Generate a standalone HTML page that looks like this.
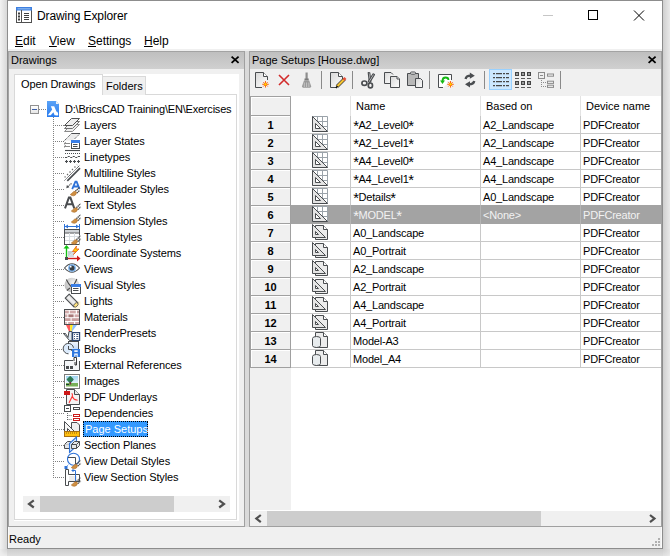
<!DOCTYPE html><html><head><meta charset="utf-8"><style>
*{margin:0;padding:0;box-sizing:border-box}
html,body{width:670px;height:556px;overflow:hidden;background:#f0f0f0}
body{position:relative;font-family:"Liberation Sans",sans-serif;font-size:11px;color:#000}
.a{position:absolute}
.t{position:absolute;white-space:nowrap;line-height:13px}
.d{letter-spacing:-0.2px}
.st{display:inline-block;transform:scale(1.35);transform-origin:50% 35%;margin:0 0.7px}
.u{text-decoration:underline}
svg{position:absolute;overflow:visible}
.hdr{background:linear-gradient(to bottom,#a3a3a3 0,#a3a3a3 1px,#bfbfbf 1px,#d0d0d0 100%)}
</style></head><body>
<div class="a" style="left:0px;top:0px;width:7px;height:549px;background:linear-gradient(to right,#f2f2f2,#d8d8d8)"></div>
<div class="a" style="left:663px;top:0px;width:7px;height:549px;background:linear-gradient(to right,#cfcfcf,#e9e9e9)"></div>
<div class="a" style="left:7px;top:549px;width:656px;height:7px;background:linear-gradient(to bottom,#cdcdcd,#dedede)"></div>
<div class="a" style="left:0px;top:549px;width:7px;height:7px;background:radial-gradient(circle at 100% 0,#d6d6d6 0,#ececec 7px,#f0f0f0 10px)"></div>
<div class="a" style="left:663px;top:549px;width:7px;height:7px;background:radial-gradient(circle at 0 0,#cfcfcf 0,#e6e6e6 8px,#eeeeee 10px)"></div>
<div class="a" style="left:7px;top:0px;width:656px;height:549px;border:1px solid #8d8d8d;background:#fff"></div>
<div class="t" style="left:37px;top:10px;font-size:12px;letter-spacing:-0.1px">Drawing Explorer</div>
<div class="a" style="left:543px;top:15px;width:10px;height:1px;background:#c6c6c6"></div>
<div class="a" style="left:588px;top:10px;width:10px;height:10px;border:1px solid #000"></div>
<svg style="left:633px;top:10px" width="12" height="11" viewBox="0 0 12 11"><path d="M1 0.5L11 10.5M11 0.5L1 10.5" stroke="#000" stroke-width="1"/></svg>
<div class="t" style="left:15px;top:35px;font-size:12px"><span class="u">E</span>dit</div>
<div class="t" style="left:49px;top:35px;font-size:12px"><span class="u">V</span>iew</div>
<div class="t" style="left:88px;top:35px;font-size:12px"><span class="u">S</span>ettings</div>
<div class="t" style="left:144px;top:35px;font-size:12px"><span class="u">H</span>elp</div>
<div class="a" style="left:8px;top:49px;width:654px;height:2px;background:#f0f0f0"></div>
<div class="a" style="left:8px;top:51px;width:237px;height:476px;background:#f0f0f0;border-left:1px solid #a4a4a4;border-right:1px solid #a0a0a0;border-bottom:1px solid #a0a0a0"></div>
<div class="a hdr" style="left:9px;top:51px;width:235px;height:18px"></div>
<div class="t" style="left:11px;top:54px;">Drawings</div>
<svg style="left:231px;top:56px" width="9" height="8" viewBox="0 0 9 8"><path d="M0.6 0.6L7.6 6.9M7.6 0.6L0.6 6.9" stroke="#000" stroke-width="1.8"/></svg>
<div class="a" style="left:14px;top:74px;width:225px;height:447px;background:#fff"></div>
<div class="a" style="left:14px;top:94px;width:223px;height:426px;border:1px solid #d9d9d9"></div>
<div class="a" style="left:14px;top:74px;width:89px;height:21px;background:#fff;border:1px solid #d9d9d9;border-bottom:none"></div>
<div class="a" style="left:102px;top:76px;width:44px;height:19px;background:#f0f0f0;border:1px solid #d9d9d9;border-bottom:none"></div>
<div class="t" style="left:21px;top:78px;letter-spacing:-0.1px">Open Drawings</div>
<div class="t" style="left:106px;top:80px;">Folders</div>
<div class="a" style="left:30px;top:105px;width:9px;height:9px;border:1px solid #919191;background:linear-gradient(#fff,#e6e6e6)"></div>
<div class="a" style="left:32px;top:109px;width:5px;height:1px;background:#3c5fa8"></div>
<div class="a" style="left:39px;top:109px;width:7px;height:1px;background:repeating-linear-gradient(to right,#808080 0 1px,transparent 1px 2px)"></div>
<div class="a" style="left:53px;top:117px;width:1px;height:361px;background:repeating-linear-gradient(to bottom,#808080 0 1px,transparent 1px 2px)"></div>
<svg style="left:47px;top:101px" width="12" height="16" viewBox="0 0 12 16"><path d="M0 0H8L12 4V16H0Z" fill="#3d8ee8"/><path d="M8 0V4H12" fill="#cfe3fa"/><path d="M3 13L6 6L9 13M4 10H8" stroke="#fff" stroke-width="1.6" fill="none"/></svg>
<div class="t" style="left:65px;top:103px;letter-spacing:-0.2px">D:\BricsCAD Training\EN\Exercises</div>
<div class="a" style="left:54px;top:125px;width:10px;height:1px;background:repeating-linear-gradient(to right,transparent 0 1px,#808080 1px 2px)"></div>
<div class="t" style="left:84px;top:119px;letter-spacing:-0.1px">Layers</div>
<div class="a" style="left:54px;top:141px;width:10px;height:1px;background:repeating-linear-gradient(to right,transparent 0 1px,#808080 1px 2px)"></div>
<div class="t" style="left:84px;top:135px;letter-spacing:-0.1px">Layer States</div>
<div class="a" style="left:54px;top:157px;width:10px;height:1px;background:repeating-linear-gradient(to right,transparent 0 1px,#808080 1px 2px)"></div>
<div class="t" style="left:84px;top:151px;letter-spacing:-0.1px">Linetypes</div>
<div class="a" style="left:54px;top:173px;width:10px;height:1px;background:repeating-linear-gradient(to right,transparent 0 1px,#808080 1px 2px)"></div>
<div class="t" style="left:84px;top:167px;letter-spacing:-0.1px">Multiline Styles</div>
<div class="a" style="left:54px;top:189px;width:10px;height:1px;background:repeating-linear-gradient(to right,transparent 0 1px,#808080 1px 2px)"></div>
<div class="t" style="left:84px;top:183px;letter-spacing:-0.1px">Multileader Styles</div>
<div class="a" style="left:54px;top:205px;width:10px;height:1px;background:repeating-linear-gradient(to right,transparent 0 1px,#808080 1px 2px)"></div>
<div class="t" style="left:84px;top:199px;letter-spacing:-0.1px">Text Styles</div>
<div class="a" style="left:54px;top:221px;width:10px;height:1px;background:repeating-linear-gradient(to right,transparent 0 1px,#808080 1px 2px)"></div>
<div class="t" style="left:84px;top:215px;letter-spacing:-0.1px">Dimension Styles</div>
<div class="a" style="left:54px;top:237px;width:10px;height:1px;background:repeating-linear-gradient(to right,transparent 0 1px,#808080 1px 2px)"></div>
<div class="t" style="left:84px;top:231px;letter-spacing:-0.1px">Table Styles</div>
<div class="a" style="left:54px;top:253px;width:10px;height:1px;background:repeating-linear-gradient(to right,transparent 0 1px,#808080 1px 2px)"></div>
<div class="t" style="left:84px;top:247px;letter-spacing:-0.1px">Coordinate Systems</div>
<div class="a" style="left:54px;top:269px;width:10px;height:1px;background:repeating-linear-gradient(to right,transparent 0 1px,#808080 1px 2px)"></div>
<div class="t" style="left:84px;top:263px;letter-spacing:-0.1px">Views</div>
<div class="a" style="left:54px;top:285px;width:10px;height:1px;background:repeating-linear-gradient(to right,transparent 0 1px,#808080 1px 2px)"></div>
<div class="t" style="left:84px;top:279px;letter-spacing:-0.1px">Visual Styles</div>
<div class="a" style="left:54px;top:301px;width:10px;height:1px;background:repeating-linear-gradient(to right,transparent 0 1px,#808080 1px 2px)"></div>
<div class="t" style="left:84px;top:295px;letter-spacing:-0.1px">Lights</div>
<div class="a" style="left:54px;top:317px;width:10px;height:1px;background:repeating-linear-gradient(to right,transparent 0 1px,#808080 1px 2px)"></div>
<div class="t" style="left:84px;top:311px;letter-spacing:-0.1px">Materials</div>
<div class="a" style="left:54px;top:333px;width:10px;height:1px;background:repeating-linear-gradient(to right,transparent 0 1px,#808080 1px 2px)"></div>
<div class="t" style="left:84px;top:327px;letter-spacing:-0.1px">RenderPresets</div>
<div class="a" style="left:54px;top:349px;width:10px;height:1px;background:repeating-linear-gradient(to right,transparent 0 1px,#808080 1px 2px)"></div>
<div class="t" style="left:84px;top:343px;letter-spacing:-0.1px">Blocks</div>
<div class="a" style="left:54px;top:365px;width:10px;height:1px;background:repeating-linear-gradient(to right,transparent 0 1px,#808080 1px 2px)"></div>
<div class="t" style="left:84px;top:359px;letter-spacing:-0.1px">External References</div>
<div class="a" style="left:54px;top:381px;width:10px;height:1px;background:repeating-linear-gradient(to right,transparent 0 1px,#808080 1px 2px)"></div>
<div class="t" style="left:84px;top:375px;letter-spacing:-0.1px">Images</div>
<div class="a" style="left:54px;top:397px;width:10px;height:1px;background:repeating-linear-gradient(to right,transparent 0 1px,#808080 1px 2px)"></div>
<div class="t" style="left:84px;top:391px;letter-spacing:-0.1px">PDF Underlays</div>
<div class="a" style="left:54px;top:413px;width:10px;height:1px;background:repeating-linear-gradient(to right,transparent 0 1px,#808080 1px 2px)"></div>
<div class="t" style="left:84px;top:407px;letter-spacing:-0.1px">Dependencies</div>
<div class="a" style="left:54px;top:429px;width:10px;height:1px;background:repeating-linear-gradient(to right,transparent 0 1px,#808080 1px 2px)"></div>
<div class="a" style="left:83px;top:421px;width:65px;height:16px;background:#3399ff;border:1px dotted #000"></div>
<div class="t" style="left:85px;top:423px;color:#fff">Page Setups</div>
<div class="a" style="left:54px;top:445px;width:10px;height:1px;background:repeating-linear-gradient(to right,transparent 0 1px,#808080 1px 2px)"></div>
<div class="t" style="left:84px;top:439px;letter-spacing:-0.1px">Section Planes</div>
<div class="a" style="left:54px;top:461px;width:10px;height:1px;background:repeating-linear-gradient(to right,transparent 0 1px,#808080 1px 2px)"></div>
<div class="t" style="left:84px;top:455px;letter-spacing:-0.1px">View Detail Styles</div>
<div class="a" style="left:54px;top:477px;width:10px;height:1px;background:repeating-linear-gradient(to right,transparent 0 1px,#808080 1px 2px)"></div>
<div class="t" style="left:84px;top:471px;letter-spacing:-0.1px">View Section Styles</div>
<div class="a" style="left:23px;top:496px;width:207px;height:16px;background:#f0f0f0"></div>
<div class="a" style="left:40px;top:496px;width:134px;height:16px;background:#cdcdcd"></div>
<svg style="left:23px;top:496px" width="17" height="16" viewBox="0 0 17 16"><path d="M10.8 4.3L6 7.9L10.8 11.5" stroke="#505050" stroke-width="2.2" fill="none"/></svg>
<svg style="left:213px;top:496px" width="17" height="16" viewBox="0 0 17 16"><path d="M6.2 4.3L11 7.9L6.2 11.5" stroke="#505050" stroke-width="2.2" fill="none"/></svg>
<div class="a" style="left:245px;top:51px;width:4px;height:476px;background:#dadada"></div>
<div class="a" style="left:249px;top:51px;width:413px;height:476px;background:#f0f0f0;border-left:1px solid #a0a0a0;border-bottom:1px solid #a0a0a0;border-right:1px solid #a0a0a0"></div>
<div class="a hdr" style="left:250px;top:51px;width:411px;height:18px"></div>
<div class="t" style="left:252px;top:54px;">Page Setups [House.dwg]</div>
<svg style="left:648px;top:56px" width="9" height="8" viewBox="0 0 9 8"><path d="M0.6 0.6L7.6 6.9M7.6 0.6L0.6 6.9" stroke="#000" stroke-width="1.8"/></svg>
<div class="a" style="left:250px;top:96px;width:411px;height:415px;background:#fff"></div>
<div class="a" style="left:250px;top:96px;width:41px;height:414px;background:#f0f0f0"></div>
<div class="a" style="left:350px;top:96px;width:1px;height:20px;background:#e3e3e3"></div>
<div class="a" style="left:350px;top:116px;width:1px;height:252px;background:#c8c8c8"></div>
<div class="a" style="left:480px;top:96px;width:1px;height:20px;background:#e3e3e3"></div>
<div class="a" style="left:480px;top:116px;width:1px;height:252px;background:#c8c8c8"></div>
<div class="a" style="left:580px;top:96px;width:1px;height:20px;background:#e3e3e3"></div>
<div class="a" style="left:580px;top:116px;width:1px;height:252px;background:#c8c8c8"></div>
<div class="a" style="left:250px;top:96px;width:41px;height:20px;border:1px solid #a0a0a0;box-shadow:inset 1px 1px 0 #fff"></div>
<div class="a" style="left:291px;top:133px;width:370px;height:1px;background:#c8c8c8"></div>
<div class="a" style="left:250px;top:115px;width:41px;height:19px;border:1px solid #a0a0a0;box-shadow:inset 1px 1px 0 #fff"></div>
<div class="t" style="left:250px;top:119px;width:41px;text-align:center;font-weight:bold">1</div>
<div class="t" style="left:353px;top:119px;;letter-spacing:-0.2px"><span class="st">*</span>A2_Level0<span class="st">*</span></div>
<div class="t" style="left:483px;top:119px;;letter-spacing:-0.2px">A2_Landscape</div>
<div class="t" style="left:583px;top:119px;;letter-spacing:-0.2px">PDFCreator</div>
<div class="a" style="left:291px;top:151px;width:370px;height:1px;background:#c8c8c8"></div>
<div class="a" style="left:250px;top:133px;width:41px;height:19px;border:1px solid #a0a0a0;box-shadow:inset 1px 1px 0 #fff"></div>
<div class="t" style="left:250px;top:137px;width:41px;text-align:center;font-weight:bold">2</div>
<div class="t" style="left:353px;top:137px;;letter-spacing:-0.2px"><span class="st">*</span>A2_Level1<span class="st">*</span></div>
<div class="t" style="left:483px;top:137px;;letter-spacing:-0.2px">A2_Landscape</div>
<div class="t" style="left:583px;top:137px;;letter-spacing:-0.2px">PDFCreator</div>
<div class="a" style="left:291px;top:169px;width:370px;height:1px;background:#c8c8c8"></div>
<div class="a" style="left:250px;top:151px;width:41px;height:19px;border:1px solid #a0a0a0;box-shadow:inset 1px 1px 0 #fff"></div>
<div class="t" style="left:250px;top:155px;width:41px;text-align:center;font-weight:bold">3</div>
<div class="t" style="left:353px;top:155px;;letter-spacing:-0.2px"><span class="st">*</span>A4_Level0<span class="st">*</span></div>
<div class="t" style="left:483px;top:155px;;letter-spacing:-0.2px">A4_Landscape</div>
<div class="t" style="left:583px;top:155px;;letter-spacing:-0.2px">PDFCreator</div>
<div class="a" style="left:291px;top:187px;width:370px;height:1px;background:#c8c8c8"></div>
<div class="a" style="left:250px;top:169px;width:41px;height:19px;border:1px solid #a0a0a0;box-shadow:inset 1px 1px 0 #fff"></div>
<div class="t" style="left:250px;top:173px;width:41px;text-align:center;font-weight:bold">4</div>
<div class="t" style="left:353px;top:173px;;letter-spacing:-0.2px"><span class="st">*</span>A4_Level1<span class="st">*</span></div>
<div class="t" style="left:483px;top:173px;;letter-spacing:-0.2px">A4_Landscape</div>
<div class="t" style="left:583px;top:173px;;letter-spacing:-0.2px">PDFCreator</div>
<div class="a" style="left:291px;top:205px;width:370px;height:1px;background:#c8c8c8"></div>
<div class="a" style="left:250px;top:187px;width:41px;height:19px;border:1px solid #a0a0a0;box-shadow:inset 1px 1px 0 #fff"></div>
<div class="t" style="left:250px;top:191px;width:41px;text-align:center;font-weight:bold">5</div>
<div class="t" style="left:353px;top:191px;;letter-spacing:-0.2px"><span class="st">*</span>Details<span class="st">*</span></div>
<div class="t" style="left:483px;top:191px;;letter-spacing:-0.2px">A0_Landscape</div>
<div class="t" style="left:583px;top:191px;;letter-spacing:-0.2px">PDFCreator</div>
<div class="a" style="left:291px;top:223px;width:370px;height:1px;background:#c8c8c8"></div>
<div class="a" style="left:291px;top:205px;width:370px;height:19px;background:#a3a3a3"></div>
<div class="a" style="left:350px;top:205px;width:1px;height:19px;background:#b4b4b4"></div>
<div class="a" style="left:480px;top:205px;width:1px;height:19px;background:#b4b4b4"></div>
<div class="a" style="left:580px;top:205px;width:1px;height:19px;background:#b4b4b4"></div>
<div class="a" style="left:250px;top:205px;width:41px;height:19px;border:1px solid #a0a0a0;box-shadow:inset 1px 1px 0 #fff"></div>
<div class="t" style="left:250px;top:209px;width:41px;text-align:center;font-weight:bold">6</div>
<div class="t" style="left:353px;top:209px;color:#f2f2f2;letter-spacing:-0.2px"><span class="st">*</span>MODEL<span class="st">*</span></div>
<div class="t" style="left:483px;top:209px;color:#f2f2f2;letter-spacing:-0.2px">&lt;None&gt;</div>
<div class="t" style="left:583px;top:209px;color:#f2f2f2;letter-spacing:-0.2px">PDFCreator</div>
<div class="a" style="left:291px;top:241px;width:370px;height:1px;background:#c8c8c8"></div>
<div class="a" style="left:250px;top:223px;width:41px;height:19px;border:1px solid #a0a0a0;box-shadow:inset 1px 1px 0 #fff"></div>
<div class="t" style="left:250px;top:227px;width:41px;text-align:center;font-weight:bold">7</div>
<div class="t" style="left:353px;top:227px;;letter-spacing:-0.2px">A0_Landscape</div>
<div class="t" style="left:483px;top:227px;;letter-spacing:-0.2px"></div>
<div class="t" style="left:583px;top:227px;;letter-spacing:-0.2px">PDFCreator</div>
<div class="a" style="left:291px;top:259px;width:370px;height:1px;background:#c8c8c8"></div>
<div class="a" style="left:250px;top:241px;width:41px;height:19px;border:1px solid #a0a0a0;box-shadow:inset 1px 1px 0 #fff"></div>
<div class="t" style="left:250px;top:245px;width:41px;text-align:center;font-weight:bold">8</div>
<div class="t" style="left:353px;top:245px;;letter-spacing:-0.2px">A0_Portrait</div>
<div class="t" style="left:483px;top:245px;;letter-spacing:-0.2px"></div>
<div class="t" style="left:583px;top:245px;;letter-spacing:-0.2px">PDFCreator</div>
<div class="a" style="left:291px;top:277px;width:370px;height:1px;background:#c8c8c8"></div>
<div class="a" style="left:250px;top:259px;width:41px;height:19px;border:1px solid #a0a0a0;box-shadow:inset 1px 1px 0 #fff"></div>
<div class="t" style="left:250px;top:263px;width:41px;text-align:center;font-weight:bold">9</div>
<div class="t" style="left:353px;top:263px;;letter-spacing:-0.2px">A2_Landscape</div>
<div class="t" style="left:483px;top:263px;;letter-spacing:-0.2px"></div>
<div class="t" style="left:583px;top:263px;;letter-spacing:-0.2px">PDFCreator</div>
<div class="a" style="left:291px;top:295px;width:370px;height:1px;background:#c8c8c8"></div>
<div class="a" style="left:250px;top:277px;width:41px;height:19px;border:1px solid #a0a0a0;box-shadow:inset 1px 1px 0 #fff"></div>
<div class="t" style="left:250px;top:281px;width:41px;text-align:center;font-weight:bold">10</div>
<div class="t" style="left:353px;top:281px;;letter-spacing:-0.2px">A2_Portrait</div>
<div class="t" style="left:483px;top:281px;;letter-spacing:-0.2px"></div>
<div class="t" style="left:583px;top:281px;;letter-spacing:-0.2px">PDFCreator</div>
<div class="a" style="left:291px;top:313px;width:370px;height:1px;background:#c8c8c8"></div>
<div class="a" style="left:250px;top:295px;width:41px;height:19px;border:1px solid #a0a0a0;box-shadow:inset 1px 1px 0 #fff"></div>
<div class="t" style="left:250px;top:299px;width:41px;text-align:center;font-weight:bold">11</div>
<div class="t" style="left:353px;top:299px;;letter-spacing:-0.2px">A4_Landscape</div>
<div class="t" style="left:483px;top:299px;;letter-spacing:-0.2px"></div>
<div class="t" style="left:583px;top:299px;;letter-spacing:-0.2px">PDFCreator</div>
<div class="a" style="left:291px;top:331px;width:370px;height:1px;background:#c8c8c8"></div>
<div class="a" style="left:250px;top:313px;width:41px;height:19px;border:1px solid #a0a0a0;box-shadow:inset 1px 1px 0 #fff"></div>
<div class="t" style="left:250px;top:317px;width:41px;text-align:center;font-weight:bold">12</div>
<div class="t" style="left:353px;top:317px;;letter-spacing:-0.2px">A4_Portrait</div>
<div class="t" style="left:483px;top:317px;;letter-spacing:-0.2px"></div>
<div class="t" style="left:583px;top:317px;;letter-spacing:-0.2px">PDFCreator</div>
<div class="a" style="left:291px;top:349px;width:370px;height:1px;background:#c8c8c8"></div>
<div class="a" style="left:250px;top:331px;width:41px;height:19px;border:1px solid #a0a0a0;box-shadow:inset 1px 1px 0 #fff"></div>
<div class="t" style="left:250px;top:335px;width:41px;text-align:center;font-weight:bold">13</div>
<div class="t" style="left:353px;top:335px;;letter-spacing:-0.2px">Model-A3</div>
<div class="t" style="left:483px;top:335px;;letter-spacing:-0.2px"></div>
<div class="t" style="left:583px;top:335px;;letter-spacing:-0.2px">PDFCreator</div>
<div class="a" style="left:291px;top:367px;width:370px;height:1px;background:#c8c8c8"></div>
<div class="a" style="left:250px;top:349px;width:41px;height:19px;border:1px solid #a0a0a0;box-shadow:inset 1px 1px 0 #fff"></div>
<div class="t" style="left:250px;top:353px;width:41px;text-align:center;font-weight:bold">14</div>
<div class="t" style="left:353px;top:353px;;letter-spacing:-0.2px">Model_A4</div>
<div class="t" style="left:483px;top:353px;;letter-spacing:-0.2px"></div>
<div class="t" style="left:583px;top:353px;;letter-spacing:-0.2px">PDFCreator</div>
<div class="t" style="left:356px;top:100px;">Name</div>
<div class="t" style="left:486px;top:100px;">Based on</div>
<div class="t" style="left:586px;top:100px;">Device name</div>
<div class="a" style="left:250px;top:510px;width:411px;height:1px;background:#fff"></div>
<div class="a" style="left:250px;top:511px;width:411px;height:15px;background:#f0f0f0"></div>
<div class="a" style="left:267px;top:511px;width:274px;height:15px;background:#cdcdcd"></div>
<svg style="left:250px;top:511px" width="17" height="15" viewBox="0 0 17 15"><path d="M10.8 4L6.3 7.6L10.8 11.2" stroke="#505050" stroke-width="2.2" fill="none"/></svg>
<svg style="left:644px;top:511px" width="17" height="15" viewBox="0 0 17 15"><path d="M6 4L10.5 7.6L6 11.2" stroke="#505050" stroke-width="2.2" fill="none"/></svg>
<div class="a" style="left:8px;top:527px;width:654px;height:21px;background:#f0f0f0;border-left:1px solid #fafafa;border-right:1px solid #fafafa"></div>
<div class="t" style="left:9px;top:533px;">Ready</div>
<div class="a" style="left:658px;top:538px;width:2px;height:2px;background:#b0b0b0"></div>
<div class="a" style="left:655px;top:541px;width:2px;height:2px;background:#b0b0b0"></div>
<div class="a" style="left:658px;top:541px;width:2px;height:2px;background:#b0b0b0"></div>
<div class="a" style="left:652px;top:544px;width:2px;height:2px;background:#b0b0b0"></div>
<div class="a" style="left:655px;top:544px;width:2px;height:2px;background:#b0b0b0"></div>
<div class="a" style="left:658px;top:544px;width:2px;height:2px;background:#b0b0b0"></div>
<svg style="left:0;top:0" width="670" height="556" viewBox="0 0 670 556"><defs><linearGradient id="rb" x1="0" y1="0" x2="0" y2="1"><stop offset="0" stop-color="#5aa2f6"/><stop offset="1" stop-color="#2a7cee"/></linearGradient></defs><path d="M47 101H56L59 104V117H47Z" fill="url(#rb)"/><path d="M56 101V104H59Z" fill="#f2f2f2"/><path d="M50.8 106.2H54.2L58 115.2H54.6L53.4 112.2L50.7 115.2H47.8L52.2 109.6Z" fill="#fff"/><path d="M55 111.8H57.2Q58.2 112.5 58.2 115.2H55.8Z" fill="#fff"/><path d="M71.5 124.5H79.5L72.5 131.5H64.5Z" fill="#eeeeee" stroke="#8a8a8a"/><path d="M71.5 121.5H79.5L72.5 128.5H64.5Z" fill="#eeeeee" stroke="#707070"/><path d="M71.5 118.5H79.5L72.5 125.5H64.5Z" fill="#eeeeee" stroke="#505050"/><path d="M71.5 133.5H79.5L72.5 140.5H64.5Z" fill="#ececec"/><path d="M71.5 133.5H80" stroke="#4a4d50"/><path d="M71.5 133.5L63.5 141.5" stroke="#4a4d50" stroke-dasharray="1.2 0.8"/><path d="M79.5 134L74.5 139" stroke="#4a4d50" stroke-dasharray="1.2 0.8"/><path d="M64 143.5H70M64 146.5H70M65.5 142L64.5 144.5M65.5 145L64.5 147.5" stroke="#8a8a8a"/><rect x="71.5" y="140.5" width="8" height="8" fill="#fff" stroke="#4a4d50"/><rect x="71" y="140" width="9" height="3" fill="#3a7ee6"/><path d="M73 144.5H77.5M73 146.5H77.5" stroke="#4a4d50"/><path d="M65 150.5H80" stroke="#4a4d50" stroke-width="1.1"/><path d="M65 153.5H80" stroke="#4a4d50" stroke-dasharray="1 1"/><path d="M65 157.5H67L68 156.5H69.5L70.5 157.5H72L73 156.5H74.5L75.5 157.5H77L78 156.5H80" stroke="#4a4d50" fill="none"/><path d="M65.0 161.5H68.0M66.5 160V163" stroke="#4a4d50" stroke-width="1.1"/><path d="M69.0 161.5H72.0M70.5 160V163" stroke="#4a4d50" stroke-width="1.1"/><path d="M73.0 161.5H76.0M74.5 160V163" stroke="#4a4d50" stroke-width="1.1"/><path d="M77.0 161.5H80.0M78.5 160V163" stroke="#4a4d50" stroke-width="1.1"/><path d="M64.5 180.5L79.5 165.5" stroke="#4a4d50" stroke-dasharray="1.2 0.4"/><path d="M67.3 180.8L80 168.1" stroke="#4a4d50" stroke-width="1.7"/><path d="M64.6 177.4L77.2 164.8" stroke="#6a6a6a" stroke-width="1.3" stroke-dasharray="1.3 2.2"/><path d="M72.2 189.2L75.4 181.6H76.6L79.6 189.2M73.6 186.5H78.2" stroke="#2f73d8" stroke-width="1.8" fill="none"/><path d="M71.5 183.5L68 186.5" stroke="#4a4d50" stroke-width="1.1" stroke-dasharray="1.2 0.6"/><path d="M66.3 188.3L66.9 185L69.4 187.3Z" fill="#4a4d50"/><path d="M75.4 191.3L79.6 187.1M76.9 193.1L79.8 190.2" stroke="#4a4d50" stroke-width="1.3" stroke-dasharray="1.4 0.5"/><path d="M70.3 194.5Q72 193.3 73.5 191.7Q75 190.7 76.7 192.5Q75.8 195.8 73.5 195.8Q71.5 195.8 70.3 194.5Z" fill="#cf8f42" stroke="#a86a28" stroke-width="0.6"/><path d="M65 208.3L68.9 197.6H70.4L74.3 208.3M66.6 204.3H72.7" stroke="#4a4d50" stroke-width="2" fill="none"/><path d="M76.4 207.8L80.6 203.6M77.9 209.6L80.8 206.7" stroke="#4a4d50" stroke-width="1.3" stroke-dasharray="1.4 0.5"/><path d="M71.3 211Q73 209.8 74.5 208.2Q76 207.2 77.7 209Q76.8 212.3 74.5 212.3Q72.5 212.3 71.3 211Z" fill="#cf8f42" stroke="#a86a28" stroke-width="0.6"/><path d="M76.4 218.8L80.6 214.6M77.9 220.6L80.8 217.7" stroke="#4a4d50" stroke-width="1.3" stroke-dasharray="1.4 0.5"/><path d="M71.3 222Q73 220.8 74.5 219.2Q76 218.2 77.7 220Q76.8 223.3 74.5 223.3Q72.5 223.3 71.3 222Z" fill="#cf8f42" stroke="#a86a28" stroke-width="0.6"/><path d="M64.5 224V229M79.5 224V229M65 226.5H79" stroke="#2f73d8"/><path d="M65 226.5L68 224.5V228.5Z M79 226.5L76 224.5V228.5Z" fill="#2f73d8"/><rect x="64.5" y="229.5" width="15" height="15" fill="#fff" stroke="#4a4d50"/><rect x="65" y="230" width="14" height="2.5" fill="#d0d4d8"/><path d="M65 233H80" stroke="#4a4d50"/><path d="M69.5 233V244M74.5 233V244M65 236.5H79M65 240.5H79" stroke="#d8dde2"/><rect x="79.5" y="235" width="1.5" height="10" fill="#fff"/><path d="M76.4 239.8L80.6 235.6M77.9 241.6L80.8 238.7" stroke="#4a4d50" stroke-width="1.3" stroke-dasharray="1.4 0.5"/><path d="M71.3 243Q73 241.8 74.5 240.2Q76 239.2 77.7 241Q76.8 244.3 74.5 244.3Q72.5 244.3 71.3 243Z" fill="#cf8f42" stroke="#a86a28" stroke-width="0.6"/><path d="M68 251H74L68 257Z" fill="#c4ccd4"/><path d="M74 251V257H68Z" fill="#d4dae0"/><path d="M66.5 257V247" stroke="#10c010" stroke-width="1.4"/><path d="M63.5 248.5L66.5 245L69.5 248.5Z" fill="#10c010"/><path d="M68 258.5H78" stroke="#d01818" stroke-width="1.4"/><path d="M77 255.5L80.5 258.5L77 261.5Z" fill="#d01818"/><rect x="65" y="257" width="3" height="3" fill="#4a4d50"/><path d="M76.5 246L72.5 251.5H75.5L73.5 254.5L79 249H76Z" fill="#ffd000" stroke="#e85a10" stroke-width="0.8"/><path d="M64.5 268Q72 259.5 79.5 268Q72 276.5 64.5 268Z" fill="#fff" stroke="#4a4d50" stroke-width="1.1"/><circle cx="72" cy="268" r="3.2" fill="#3a3f44" stroke="#7db8f5" stroke-width="1.3"/><rect x="70" y="266" width="1.5" height="1.5" fill="#fff"/><defs><radialGradient id="vs" cx="0.6" cy="0.35" r="0.7"><stop offset="0" stop-color="#f2f2f2"/><stop offset="1" stop-color="#b8b8b8"/></radialGradient></defs><circle cx="71.8" cy="285" r="7.3" fill="url(#vs)"/><path d="M66.3 279.5Q68.5 284 71 286.5M76.8 279Q75.8 282 74.2 284M67 290.5Q68.5 289 70 288" stroke="#4a4a4a" stroke-width="1.1" fill="none"/><rect x="71.5" y="284.5" width="9" height="9" fill="#fff" stroke="#4a4d50"/><rect x="71" y="284" width="10" height="3" fill="#3a7ee6"/><path d="M73 288.5H78.5M73 290.5H78.5" stroke="#4a4d50"/><defs><linearGradient id="lb" x1="0" y1="0" x2="1" y2="1"><stop offset="0" stop-color="#ffe9a0"/><stop offset="1" stop-color="#fff8e0" stop-opacity="0.4"/></linearGradient></defs><path d="M74.5 301.5H80.5V309.5H74.5Z" fill="url(#lb)"/><defs><linearGradient id="lc" x1="0" y1="1" x2="1" y2="0"><stop offset="0" stop-color="#9a9a9a"/><stop offset="0.5" stop-color="#f0f0f0"/><stop offset="1" stop-color="#b0b0b0"/></linearGradient></defs><path d="M65.2 298.2L69.2 294.2L77.9 302.9L73.9 306.9Z" fill="url(#lc)" stroke="#4a4d50" stroke-width="1.1" stroke-linejoin="round"/><ellipse cx="75.9" cy="304.9" rx="2.6" ry="1.7" transform="rotate(-45 75.9 304.9)" fill="#ffe27a" stroke="#555" stroke-width="0.8"/><rect x="64.5" y="309.5" width="15" height="15" fill="#fff" stroke="#4a4d50"/><rect x="65" y="310.6" width="3.8" height="2.8" fill="#d2aaaa"/><rect x="69.8" y="310.6" width="6" height="2.8" fill="#d2aaaa"/><rect x="77" y="310.6" width="2" height="2.8" fill="#c09a9a"/><rect x="65" y="314.4" width="2.4" height="2.8" fill="#d2aaaa"/><rect x="68.4" y="314.4" width="5.2" height="2.8" fill="#a87878"/><rect x="74.6" y="314.4" width="4.4" height="2.8" fill="#d2aaaa"/><rect x="65" y="318.2" width="5.6" height="2.8" fill="#c9a0a0"/><rect x="71.6" y="318.2" width="7.4" height="2.8" fill="#c9a0a0"/><rect x="65" y="322" width="2" height="2" fill="#e0c0c0"/><rect x="68.2" y="322" width="5.8" height="2" fill="#d2aaaa"/><rect x="75.2" y="322" width="3.8" height="2" fill="#d2aaaa"/><defs><linearGradient id="rp" x1="0" y1="0" x2="0" y2="1"><stop offset="0" stop-color="#fff" stop-opacity="0.2"/><stop offset="1" stop-color="#fff" stop-opacity="0"/></linearGradient></defs><path d="M66 325H70L70.5 331.5H69Z" fill="#ff5a5a"/><path d="M70 325H73L71.5 331.5H70.5Z" fill="#ffe81a"/><path d="M73 325H77L72 331.5H71.5Z" fill="#8cc0ff"/><path d="M63.5 333.5H65.5L68 337.5L69 331.5H72V340.5H69.5Z" fill="#dde8f4" stroke="#4a4d50" stroke-width="1"/><rect x="72.6" y="332.6" width="7" height="7.8" fill="#fff" stroke="#2d4670" stroke-width="1.2"/><path d="M74 334.5H75M76.3 334.5H78.3M74 336.5H75M76.3 336.5H78.3M74 338.5H75M76.3 338.5H78.3" stroke="#2d4670" stroke-width="0.9"/><defs><linearGradient id="bk" x1="0" y1="0" x2="0" y2="1"><stop offset="0" stop-color="#f4f8fe"/><stop offset="1" stop-color="#b8d4f8"/></linearGradient></defs><rect x="68.5" y="341.5" width="10" height="9" fill="url(#bk)" stroke="#4a4d50"/><path d="M73.5 347.8A5.2 5.2 0 1 0 68.5 353.8" fill="#dcebfc" stroke="#4a4d50"/><path d="M68.5 346V349.5H73" stroke="#4a4d50" fill="none"/><rect x="72" y="349" width="8" height="8" fill="#2f78e0"/><rect x="74.3" y="350.3" width="3.4" height="1.6" fill="#fff"/><path d="M74.3 353.5H77.7V356.8H76.6V354.8H75.4V356.8H74.3Z" fill="#fff"/><path d="M79.5 361V370.5H64.5V360.5H73" fill="#f4f6f8" stroke="#4a4d50"/><rect x="66" y="366" width="3" height="3" fill="#4a4d50"/><rect x="70" y="366" width="3" height="3" fill="#4a4d50"/><path d="M74 361V357.5H76.5V365H75V362" stroke="#222" stroke-width="0.9" fill="none"/><rect x="64.5" y="374.5" width="15" height="14" fill="#fff" stroke="#7a7a7a"/><defs><linearGradient id="sky" x1="0" y1="0" x2="0" y2="1"><stop offset="0" stop-color="#9fd4f2"/><stop offset="1" stop-color="#e4f3fb"/></linearGradient></defs><rect x="66" y="376" width="12" height="7" fill="url(#sky)"/><rect x="66" y="383" width="12" height="3.5" fill="#78b058"/><path d="M70.2 376.8L73 379.6L70.2 382.4L67.4 379.6Z" fill="#2e7a56" stroke="#2e7a56" stroke-width="1.4" stroke-linejoin="round"/><rect x="69.6" y="382" width="1.5" height="2.5" fill="#7a2a3a"/><rect x="66" y="384" width="3" height="1" fill="#1e3a30"/><path d="M66.5 389.5H74.5L79.5 394.5V404.5H66.5Z" fill="#f4f4f4" stroke="#4a4d50"/><path d="M74.5 389.5V394.5H79.5" fill="#e8e8e8" stroke="#4a4d50"/><rect x="64" y="391" width="6" height="4" fill="#cc1818"/><path d="M69.2 402.6L72.3 396.2Q72.8 394.6 72 393.6M72.3 396.2L73.6 398.6Q74.6 399.8 77.6 400.2Q75 400 73.6 398.6" fill="none" stroke="#ff3434" stroke-width="1.1" stroke-linecap="round"/><rect x="64.5" y="405.5" width="6" height="6" fill="#fff" stroke="#4a4d50"/><path d="M66 408.5H69" stroke="#4a4d50"/><rect x="73.5" y="407.5" width="6" height="2" fill="#fff" stroke="#4a4d50"/><path d="M67.5 413V421M67.5 415.5H72M67.5 419.5H72" stroke="#4a4d50" stroke-dasharray="0.8 1.2"/><rect x="73.5" y="414.5" width="6" height="2" fill="#fff" stroke="#cc1a1a"/><rect x="73.5" y="418.5" width="6" height="2" fill="#fff" stroke="#cc1a1a"/><path d="M71.5 431V422.5H77L79.5 425V431" fill="#f0f0f0" stroke="#4a4d50"/><path d="M64.5 431V421.5L74 431" fill="#f6f6f6" stroke="#4a4d50"/><path d="M67.5 431V428.5L70 431" fill="none" stroke="#4a4d50"/><rect x="64.5" y="431.5" width="15" height="5" fill="#ffc010" stroke="#a87010"/><path d="M66.5 432V434M68.5 432V434M70.5 432V434M72.5 432V434M74.5 432V434M76.5 432V434" stroke="#c89010"/><path d="M64.5 448.5V444.5L67.5 441.5H70.5V448.5Z" fill="#e4e6e8" stroke="#4a4d50"/><path d="M64.5 444.5H69.5" stroke="#c8c8c8"/><path d="M69.5 452.5V443.5L76.5 437V446Z" fill="#d8eaff" stroke="#2f73d8" stroke-width="1.1"/><path d="M71.5 448.5V444.5L74.5 441.5H79.5V445.5L76.5 448.5Z" fill="#e4e6e8" stroke="#4a4d50"/><path d="M71.5 444.5H76.5V448.5M76.5 444.5L79.5 441.5" stroke="#4a4d50" fill="none"/><circle cx="73.5" cy="459.2" r="6" fill="#fff" stroke="#2f73d8" stroke-width="1.1"/><path d="M68 457.5H75.5V464" stroke="#4a4d50" fill="none"/><path d="M69.5 463.5L66.5 466.5" stroke="#2f73d8" stroke-dasharray="1 1"/><rect x="64.5" y="466" width="3" height="3" fill="#2f73d8"/><path d="M76.4 464.3L80.6 460.1M77.9 466.1L80.8 463.2" stroke="#4a4d50" stroke-width="1.3" stroke-dasharray="1.4 0.5"/><path d="M71.3 467.5Q73 466.3 74.5 464.7Q76 463.7 77.7 465.5Q76.8 468.8 74.5 468.8Q72.5 468.8 71.3 467.5Z" fill="#cf8f42" stroke="#a86a28" stroke-width="0.6"/><path d="M65.5 469.5H68.5V474.5H79.5V481.5H68.5V485.5H65.5Z" fill="#fff" stroke="#4a4d50"/><rect x="69" y="476" width="8" height="5" fill="#ececec"/><path d="M75.5 481V470.5H72M73.5 469L72 470.5L73.5 472" stroke="#2f73d8" fill="none"/><path d="M76.4 481.8L80.6 477.6M77.9 483.6L80.8 480.7" stroke="#4a4d50" stroke-width="1.3" stroke-dasharray="1.4 0.5"/><path d="M71.3 485Q73 483.8 74.5 482.2Q76 481.2 77.7 483Q76.8 486.3 74.5 486.3Q72.5 486.3 71.3 485Z" fill="#cf8f42" stroke="#a86a28" stroke-width="0.6"/><defs><linearGradient id="pg" x1="0" y1="0" x2="1" y2="1"><stop offset="0" stop-color="#d8d8d8"/><stop offset="1" stop-color="#ffffff"/></linearGradient></defs><path d="M262 87.5H255.5V72.5H263.5L267.5 76.5V80" fill="url(#pg)" stroke="#4a4d50"/><path d="M263.5 72.5V76.5H267.5" fill="#fff" stroke="#4a4d50"/><rect x="262" y="80.5" width="7" height="7" fill="#f0f0f0"/><path d="M265.5 81.0V87.6M262.2 84.3H268.8M263.3 82.1L267.7 86.5M267.7 82.1L263.3 86.5" stroke="#ff5a00" stroke-width="0.9"/><circle cx="265.5" cy="84.3" r="1.3" fill="#ffe000" stroke="#ff6a00" stroke-width="0.5"/><path d="M279 75L289 85M289 75L279 85" stroke="#d22b2b" stroke-width="1.6"/><rect x="305.5" y="72.5" width="2.2" height="6.5" fill="#8e8e8e"/><rect x="304.5" y="78.5" width="4.2" height="2" fill="#7a7a7a"/><path d="M304 80.5H309.2L311.3 86.5L310.3 87.8H302.9L301.9 86.5Z" fill="#9a9a9a"/><path d="M304.3 82.5V87M306.6 82.5V87M308.9 82.5V87" stroke="#d0d0d0" stroke-width="0.8"/><rect x="321" y="71" width="1" height="18" fill="#8a8a8a"/><rect x="352" y="71" width="1" height="18" fill="#8a8a8a"/><rect x="429" y="71" width="1" height="18" fill="#8a8a8a"/><rect x="484" y="71" width="1" height="18" fill="#8a8a8a"/><rect x="560" y="71" width="1" height="18" fill="#8a8a8a"/><path d="M336 87.5H330.5V72.5H338.5L342.5 76.5V80" fill="url(#pg)" stroke="#4a4d50"/><path d="M338.5 72.5V76.5H342.5" fill="#fff" stroke="#4a4d50"/><path d="M337 86.5L344.5 79" stroke="#3a3a3a" stroke-width="3.6"/><path d="M337 86.5L344.5 79" stroke="#f5c430" stroke-width="2.2"/><path d="M343.5 80L345.5 78" stroke="#e8503a" stroke-width="2.6"/><path d="M336 88L337.5 86" stroke="#111" stroke-width="1.5"/><path d="M368.2 72.6L369.8 72.8L370.9 81.6L369.3 82.3Z" fill="#e6e6e6" stroke="#4a4d50" stroke-width="1.1" stroke-linejoin="round"/><path d="M373.1 73.8L374.5 74.6L369.6 82.6L368.3 81.4Z" fill="#e6e6e6" stroke="#4a4d50" stroke-width="1.1" stroke-linejoin="round"/><ellipse cx="364.4" cy="83.2" rx="2.5" ry="2.2" fill="#f4f4f4" stroke="#4a4d50" stroke-width="1.7"/><ellipse cx="370.4" cy="85.4" rx="2.1" ry="2.4" fill="#f4f4f4" stroke="#4a4d50" stroke-width="1.7"/><path d="M390 83.5H384.5V72.5H391L393 74.5" fill="url(#pg)" stroke="#4a4d50"/><path d="M390.5 76.5H397L399.5 79V87.5H390.5Z" fill="url(#pg)" stroke="#4a4d50"/><path d="M397 76.5V79H399.5" fill="#fff" stroke="#4a4d50"/><path d="M415 85.5H407.5V73.5H418.5V78" fill="#b8b8b8" stroke="#4a4d50"/><rect x="410.5" y="72" width="5" height="2.2" rx="1" fill="#f0f0f0" stroke="#4a4d50"/><path d="M415.5 78.5H420.5L422.5 80.5V87.5H415.5Z" fill="url(#pg)" stroke="#4a4d50"/><path d="M443 87.5H438.5V74.5H451.5V80" fill="#fff" stroke="#4a4d50"/><path d="M442.5 81Q442.5 77.5 445.5 77.5Q448.5 77.5 448.5 80" fill="none" stroke="#14b814" stroke-width="1.8"/><path d="M440 80.5H445L442.5 84Z" fill="#14b814"/><rect x="447" y="81" width="7" height="7" fill="#f0f0f0"/><path d="M450.5 81.0V87.6M447.2 84.3H453.8M448.3 82.1L452.7 86.5M452.7 82.1L448.3 86.5" stroke="#ff5a00" stroke-width="0.9"/><circle cx="450.5" cy="84.3" r="1.3" fill="#ffe000" stroke="#ff6a00" stroke-width="0.5"/><path d="M465.6 79Q466.2 75.6 470.8 75.6" fill="none" stroke="#4a4d50" stroke-width="2.4"/><path d="M469.8 72.6L474.8 75.7L469.8 78.8Z" fill="#4a4d50"/><path d="M474.2 81Q473.6 84.4 469 84.4" fill="none" stroke="#4a4d50" stroke-width="2.4"/><path d="M470 81.2L465 84.3L470 87.4Z" fill="#4a4d50"/><rect x="489.5" y="69.5" width="22" height="20" fill="#cce8ff" stroke="#99d1ff"/><path d="M493 73.6H495M496 73.6H502M503 73.6H505M506 73.6H509" stroke="#484848" stroke-width="1.3"/><path d="M493 77.6H495M496 77.6H502M503 77.6H505M506 77.6H509" stroke="#484848" stroke-width="1.3"/><path d="M493 81.6H495M496 81.6H502M503 81.6H505M506 81.6H509" stroke="#484848" stroke-width="1.3"/><path d="M493 85.6H495M496 85.6H502M503 85.6H505M506 85.6H509" stroke="#484848" stroke-width="1.3"/><rect x="515.65" y="72.65" width="2.7" height="2.7" fill="#f4f8fa" stroke="#444" stroke-width="1.3"/><path d="M515 78.5H519" stroke="#5a5a5a"/><rect x="515.65" y="81.65" width="2.7" height="2.7" fill="#f4f8fa" stroke="#444" stroke-width="1.3"/><path d="M515 87.5H519" stroke="#5a5a5a"/><rect x="521.65" y="72.65" width="2.7" height="2.7" fill="#f4f8fa" stroke="#444" stroke-width="1.3"/><path d="M521 78.5H525" stroke="#5a5a5a"/><rect x="521.65" y="81.65" width="2.7" height="2.7" fill="#f4f8fa" stroke="#444" stroke-width="1.3"/><path d="M521 87.5H525" stroke="#5a5a5a"/><rect x="527.65" y="72.65" width="2.7" height="2.7" fill="#f4f8fa" stroke="#444" stroke-width="1.3"/><path d="M527 78.5H531" stroke="#5a5a5a"/><rect x="527.65" y="81.65" width="2.7" height="2.7" fill="#f4f8fa" stroke="#444" stroke-width="1.3"/><path d="M527 87.5H531" stroke="#5a5a5a"/><rect x="538.5" y="72.5" width="6" height="6" fill="none" stroke="#8c8c8c"/><path d="M540 75.5H543" stroke="#8c8c8c"/><rect x="547.5" y="74" width="6" height="2.2" fill="none" stroke="#8c8c8c"/><rect x="547.5" y="81.2" width="6" height="2.2" fill="none" stroke="#8c8c8c"/><rect x="547.5" y="85.2" width="6" height="2.2" fill="none" stroke="#8c8c8c"/><rect x="541" y="80" width="1" height="1" fill="#8c8c8c"/><rect x="541" y="82" width="1" height="1" fill="#8c8c8c"/><rect x="543" y="82" width="1" height="1" fill="#8c8c8c"/><rect x="545" y="82" width="1" height="1" fill="#8c8c8c"/><rect x="541" y="84" width="1" height="1" fill="#8c8c8c"/><rect x="541" y="86" width="1" height="1" fill="#8c8c8c"/><rect x="543" y="86" width="1" height="1" fill="#8c8c8c"/><rect x="545" y="86" width="1" height="1" fill="#8c8c8c"/><path d="M312.5 116.5H327.5V131.5H312.5Z M317.5 116V131 M322.5 116V131 M312 121.5H328 M312 126.5H328" fill="#fff" stroke="#9ba3aa"/><path d="M312.5 116.5V131.5H327.5Z" fill="#e4e4e4" stroke="#4a4d50"/><path d="M315.5 123.5V128.5H320.5Z" fill="#fff" stroke="#4a4d50"/><path d="M312.5 134.5H327.5V149.5H312.5Z M317.5 134V149 M322.5 134V149 M312 139.5H328 M312 144.5H328" fill="#fff" stroke="#9ba3aa"/><path d="M312.5 134.5V149.5H327.5Z" fill="#e4e4e4" stroke="#4a4d50"/><path d="M315.5 141.5V146.5H320.5Z" fill="#fff" stroke="#4a4d50"/><path d="M312.5 152.5H327.5V167.5H312.5Z M317.5 152V167 M322.5 152V167 M312 157.5H328 M312 162.5H328" fill="#fff" stroke="#9ba3aa"/><path d="M312.5 152.5V167.5H327.5Z" fill="#e4e4e4" stroke="#4a4d50"/><path d="M315.5 159.5V164.5H320.5Z" fill="#fff" stroke="#4a4d50"/><path d="M312.5 170.5H327.5V185.5H312.5Z M317.5 170V185 M322.5 170V185 M312 175.5H328 M312 180.5H328" fill="#fff" stroke="#9ba3aa"/><path d="M312.5 170.5V185.5H327.5Z" fill="#e4e4e4" stroke="#4a4d50"/><path d="M315.5 177.5V182.5H320.5Z" fill="#fff" stroke="#4a4d50"/><path d="M312.5 188.5H327.5V203.5H312.5Z M317.5 188V203 M322.5 188V203 M312 193.5H328 M312 198.5H328" fill="#fff" stroke="#9ba3aa"/><path d="M312.5 188.5V203.5H327.5Z" fill="#e4e4e4" stroke="#4a4d50"/><path d="M315.5 195.5V200.5H320.5Z" fill="#fff" stroke="#4a4d50"/><path d="M312.5 206.5H327.5V221.5H312.5Z M317.5 206V221 M322.5 206V221 M312 211.5H328 M312 216.5H328" fill="#fff" stroke="#9ba3aa"/><path d="M312.5 206.5V221.5H327.5Z" fill="#e4e4e4" stroke="#4a4d50"/><path d="M315.5 213.5V218.5H320.5Z" fill="#fff" stroke="#4a4d50"/><path d="M315.5 225.5H323.5L327.5 229.5V239.5H315.5Z" fill="#ececec" stroke="#4a4d50"/><path d="M323.5 225.5V229.5H327.5" fill="#fff" stroke="#4a4d50"/><path d="M312.5 224.5V237.5H325.5Z" fill="#e6e6e6" stroke="#4a4d50"/><path d="M315.5 231.5V234.5H318.5Z" fill="#fff" stroke="#4a4d50"/><path d="M315.5 243.5H323.5L327.5 247.5V257.5H315.5Z" fill="#ececec" stroke="#4a4d50"/><path d="M323.5 243.5V247.5H327.5" fill="#fff" stroke="#4a4d50"/><path d="M312.5 242.5V255.5H325.5Z" fill="#e6e6e6" stroke="#4a4d50"/><path d="M315.5 249.5V252.5H318.5Z" fill="#fff" stroke="#4a4d50"/><path d="M315.5 261.5H323.5L327.5 265.5V275.5H315.5Z" fill="#ececec" stroke="#4a4d50"/><path d="M323.5 261.5V265.5H327.5" fill="#fff" stroke="#4a4d50"/><path d="M312.5 260.5V273.5H325.5Z" fill="#e6e6e6" stroke="#4a4d50"/><path d="M315.5 267.5V270.5H318.5Z" fill="#fff" stroke="#4a4d50"/><path d="M315.5 279.5H323.5L327.5 283.5V293.5H315.5Z" fill="#ececec" stroke="#4a4d50"/><path d="M323.5 279.5V283.5H327.5" fill="#fff" stroke="#4a4d50"/><path d="M312.5 278.5V291.5H325.5Z" fill="#e6e6e6" stroke="#4a4d50"/><path d="M315.5 285.5V288.5H318.5Z" fill="#fff" stroke="#4a4d50"/><path d="M315.5 297.5H323.5L327.5 301.5V311.5H315.5Z" fill="#ececec" stroke="#4a4d50"/><path d="M323.5 297.5V301.5H327.5" fill="#fff" stroke="#4a4d50"/><path d="M312.5 296.5V309.5H325.5Z" fill="#e6e6e6" stroke="#4a4d50"/><path d="M315.5 303.5V306.5H318.5Z" fill="#fff" stroke="#4a4d50"/><path d="M315.5 315.5H323.5L327.5 319.5V329.5H315.5Z" fill="#ececec" stroke="#4a4d50"/><path d="M323.5 315.5V319.5H327.5" fill="#fff" stroke="#4a4d50"/><path d="M312.5 314.5V327.5H325.5Z" fill="#e6e6e6" stroke="#4a4d50"/><path d="M315.5 321.5V324.5H318.5Z" fill="#fff" stroke="#4a4d50"/><path d="M315.5 332.5H323.5L327.5 336.5V347.5H315.5Z" fill="#ececec" stroke="#4a4d50"/><path d="M323.5 332.5V336.5H327.5" fill="#fff" stroke="#4a4d50"/><path d="M312.5 338.5Q312.5 336.5 316.5 336.5Q320.5 336.5 320.5 338.5V345.5Q320.5 347.5 316.5 347.5Q312.5 347.5 312.5 345.5Z" fill="#e8ecee" stroke="#4a4d50"/><path d="M315.5 350.5H323.5L327.5 354.5V365.5H315.5Z" fill="#ececec" stroke="#4a4d50"/><path d="M323.5 350.5V354.5H327.5" fill="#fff" stroke="#4a4d50"/><path d="M312.5 356.5Q312.5 354.5 316.5 354.5Q320.5 354.5 320.5 356.5V363.5Q320.5 365.5 316.5 365.5Q312.5 365.5 312.5 363.5Z" fill="#e8ecee" stroke="#4a4d50"/><rect x="16.5" y="7.5" width="15" height="15" fill="#fff" stroke="#505050"/><rect x="16" y="7" width="16" height="3.5" fill="#3d7fe0"/><rect x="17.5" y="8.2" width="13" height="1.2" fill="#8cb8f0"/><path d="M21.5 10V22.5" stroke="#505050"/><rect x="18" y="12.5" width="2" height="2" fill="#404040"/><rect x="18" y="15.5" width="2" height="2" fill="#404040"/><rect x="18" y="18.5" width="2" height="2" fill="#404040"/><path d="M24 13.5H29M24 15.5H29M24 17.5H29M24 19.5H29" stroke="#404040"/></svg>
</body></html>
